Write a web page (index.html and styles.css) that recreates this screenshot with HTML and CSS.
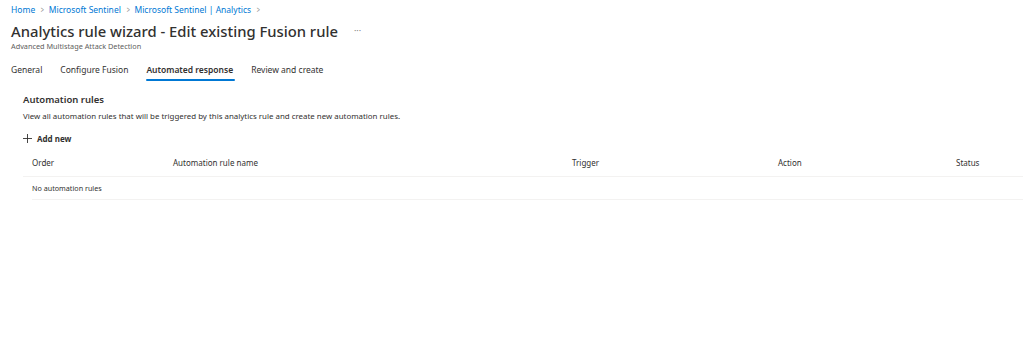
FILE: index.html
```html
<!DOCTYPE html>
<html>
<head>
<meta charset="utf-8">
<link rel="stylesheet" href="styles.css">
</head>
<body>
<div class="page">
  <nav class="crumbs">
    <a>Home</a><span class="sep">&gt;</span>
    <a>Microsoft Sentinel</a><span class="sep">&gt;</span>
    <a>Microsoft Sentinel | Analytics</a><span class="sep">&gt;</span>
  </nav>
  <div class="title-row">
    <h1>Analytics rule wizard - Edit existing Fusion rule</h1>
    <span class="more">···</span>
  </div>
  <div class="subtitle">Advanced Multistage Attack Detection</div>
  <div class="tabs">
    <span class="tab">General</span>
    <span class="tab">Configure Fusion</span>
    <span class="tab active">Automated response</span>
    <span class="tab">Review and create</span>
  </div>
  <section class="content">
    <h2>Automation rules</h2>
    <p class="desc">View all automation rules that will be triggered by this analytics rule and create new automation rules.</p>
    <div class="add"><svg width="9" height="9" viewBox="0 0 9 9"><path d="M4.5 0V9M0 4.5H9" stroke="#323130" stroke-width="0.9"/></svg><span>Add new</span></div>
    <div class="table">
      <div class="row head">
        <span class="c1">Order</span>
        <span class="c2">Automation rule name</span>
        <span class="c3">Trigger</span>
        <span class="c4">Action</span>
        <span class="c5">Status</span>
      </div>
      <div class="row body">
        <span>No automation rules</span>
      </div>
    </div>
  </section>
</div>
</body>
</html>
```

FILE: styles.css
```css
* { box-sizing: border-box; }
html, body { margin: 0; padding: 0; background: #fff; }
body { font-family: "Noto Sans", "Open Sans", sans-serif; color: #323130; }
.page { padding: 0 0 0 11px; }
.crumbs { display: flex; align-items: center; height: 18px; font-size: 8.5px; }
.crumbs a { color: #0078d4; }
.crumbs .sep { color: #8a8886; margin: 0 4px 0 5px; font-size: 8px; display: inline-block; transform: scaleX(0.7); }
.title-row { display: flex; align-items: center; height: 25px; }
h1 { margin: 0; font-size: 14.8px; font-weight: 500; color: #323130; }
.more { margin-left: 16px; color: #8a8886; font-size: 9px; }
.subtitle { font-size: 7.3px; color: #605e5c; height: 12px; line-height: 12px; margin-top: -3px; }
.tabs { display: flex; margin-top: 7px; height: 22px; }
.tab { font-size: 8.5px; margin-right: 18px; height: 22px; line-height: 22px; position: relative; color: #323130; }
.tab.active { font-weight: 600; }
.tab.active::after { content: ""; position: absolute; left: 0; right: -2px; bottom: 0; height: 2px; background: #0078d4; border-radius: 1px; }
.content { padding-left: 12px; padding-top: 11px; }
h2 { margin: 0; font-size: 9.5px; font-weight: 600; height: 16px; line-height: 16px; }
.desc { margin: 0; font-size: 7.9px; color: #323130; height: 16px; line-height: 16px; }
.add { display: flex; align-items: center; gap: 5px; height: 20px; margin-top: 4px; font-size: 8px; font-weight: 700; }
.row { display: flex; align-items: center; }
.row.head { height: 29px; font-size: 8px; border-bottom: 1px solid #f3f2f1; }
.row.body { height: 23px; font-size: 7.2px; margin-left: 9px; border-bottom: 1px solid #f3f2f1; }
.row.head span { flex: none; }
.c1 { width: 150px; padding-left: 9px; }
.c2 { width: 399px; }
.c3 { width: 206px; }
.c4 { width: 178px; }
.c5 { width: 60px; }
```
